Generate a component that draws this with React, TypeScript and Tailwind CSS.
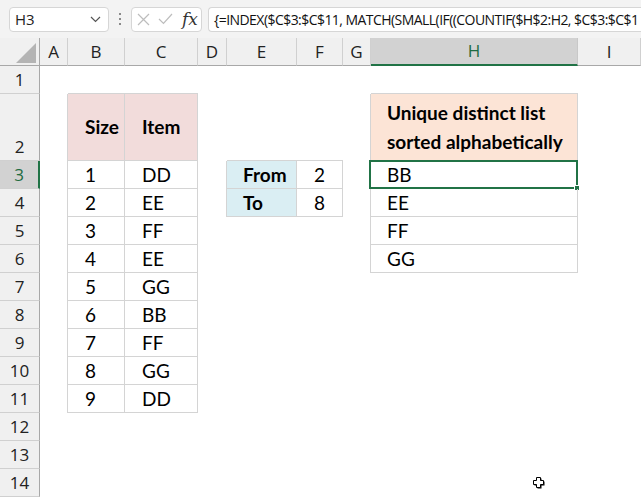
import React from "react";

const COLS: { key: string; w: string }[] = [
  { key: "A", w: "w-[28px]" },
  { key: "B", w: "w-[57px]" },
  { key: "C", w: "w-[73px]" },
  { key: "D", w: "w-[29px]" },
  { key: "E", w: "w-[70px]" },
  { key: "F", w: "w-[46px]" },
  { key: "G", w: "w-[28px]" },
  { key: "H", w: "w-[207px]" },
  { key: "I", w: "flex-1" },
];

const ROWH: Record<number, string> = { 2: "h-[67px]" };

type Cell = { text?: React.ReactNode; bg?: string; bold?: boolean; align?: string; v?: string };

const sizes = [1, 2, 3, 4, 5, 6, 7, 8, 9];
const items = ["DD", "EE", "FF", "EE", "GG", "BB", "FF", "GG", "DD"];
const uniq = ["BB", "EE", "FF", "GG"];

function cellAt(r: number, c: string): Cell | null {
  if ((c === "B" || c === "C") && r >= 2 && r <= 11) {
    if (r === 2)
      return { text: c === "B" ? "Size" : "Item", bg: "bg-[#f2dcdb]", bold: true, align: "pl-[17px]", v: "items-center" };
    return { text: c === "B" ? String(sizes[r - 3]) : items[r - 3], align: "pl-[17px]" };
  }
  if ((c === "E" || c === "F") && (r === 3 || r === 4)) {
    if (c === "E") return { text: r === 3 ? "From" : "To", bg: "bg-[#daeef3]", bold: true, align: "pl-[16px]" };
    return { text: r === 3 ? "2" : "8", align: "justify-center" };
  }
  if (c === "H" && r >= 2 && r <= 6) {
    if (r === 2)
      return {
        text: (
          <span className="leading-[29px]">
            Unique distinct list
            <br />
            sorted alphabetically
          </span>
        ),
        bg: "bg-[#fce4d6]",
        bold: true,
        align: "pl-[16px]",
        v: "items-center",
      };
    return { text: uniq[r - 3], align: "pl-[16px]" };
  }
  return null;
}

function bordered(r: number, ci: number) {
  if (ci < 0 || ci >= COLS.length) return false;
  return cellAt(r, COLS[ci].key) !== null;
}

function Cursor() {
  return (
    <svg className="absolute left-[531px] top-[475px]" width="16" height="16" viewBox="0 0 16 16">
      <path d="M5.5 2.5h4v3h3v4h-3v3h-4v-3h-3v-4h3z" fill="#000" transform="translate(1,1)" />
      <path d="M5.5 2.5h4v3h3v4h-3v3h-4v-3h-3v-4h3z" fill="#fff" stroke="#000" strokeWidth="1" />
    </svg>
  );
}

export default function App() {
  const rows = Array.from({ length: 14 }, (_, i) => i + 1);
  return (
    <div className="relative w-[641px] h-[497px] overflow-hidden bg-white font-['Lato',sans-serif] text-black">
      {/* Formula bar */}
      <div className="h-[38px] bg-[#f3f3f3] flex items-center font-['Open_Sans',sans-serif]">
        <div className="ml-[9px] w-[100px] h-[25px] bg-white border border-[#d6d6d6] rounded-[4px] flex items-center justify-between pl-[5px] pr-[7px]">
          <span className="text-[15px] text-[#222]">H3</span>
          <svg width="11" height="7" viewBox="0 0 11 7">
            <path d="M1 1l4.5 4.5L10 1" fill="none" stroke="#555" strokeWidth="1.2" />
          </svg>
        </div>
        <div className="w-[22px] flex flex-col items-center gap-[3px]">
          <div className="w-[2px] h-[2px] bg-[#8a8a8a]" />
          <div className="w-[2px] h-[2px] bg-[#8a8a8a]" />
          <div className="w-[2px] h-[2px] bg-[#8a8a8a]" />
        </div>
        <div className="w-[71px] h-[25px] bg-white border border-[#d6d6d6] rounded-[4px] flex items-center pl-[5px] gap-[8px]">
          <svg width="13" height="13" viewBox="0 0 13 13">
            <path d="M1 1l11 11M12 1L1 12" stroke="#bdbdbd" strokeWidth="1.2" />
          </svg>
          <svg width="15" height="12" viewBox="0 0 15 12">
            <path d="M1 6l4.5 4.5L14 1" fill="none" stroke="#bdbdbd" strokeWidth="1.2" />
          </svg>
          <span className="font-['DejaVu_Serif',serif] italic text-[17px] text-[#333] leading-none ml-[1px]">fx</span>
        </div>
        <div className="ml-[6px] flex-1 min-w-0 h-[25px] bg-white border border-[#d6d6d6] border-r-0 rounded-l-[4px] flex items-center pl-[5px] overflow-hidden whitespace-nowrap">
          <span className="text-[14px] tracking-[-0.55px] text-[#111]">
            {"{=INDEX($C$3:$C$11, MATCH(SMALL(IF((COUNTIF($H$2:H2, $C$3:$C$1"}
          </span>
        </div>
      </div>

      {/* Column header */}
      <div className="flex h-[28px] bg-[#f0f0f0] font-['Open_Sans',sans-serif] text-[17px] text-[#222]">
        <div className="w-[40px] border-r border-b border-[#a8a8a8] relative">
          <svg className="absolute left-[16px] top-[5px]" width="20" height="20" viewBox="0 0 20 20">
            <path d="M20 0L20 20L0 20Z" fill="#b4b4b4" />
          </svg>
        </div>
        {COLS.map((col) =>
          col.key === "H" ? (
            <div
              key={col.key}
              className={`${col.w} shrink-0 flex items-center justify-center bg-[#d2d2d2] text-[#1e6b41] border-r border-[#c8c8c8] border-b-2 border-b-[#217346]`}
            >
              {col.key}
            </div>
          ) : (
            <div
              key={col.key}
              className={`${col.w} ${col.key === "I" ? "" : "shrink-0"} flex items-center justify-center border-r border-b border-r-[#d0d0d0] border-b-[#a8a8a8]`}
            >
              {col.key}
            </div>
          )
        )}
      </div>

      {/* Rows */}
      {rows.map((r) => (
        <div key={r} className={`flex ${ROWH[r] ?? "h-[28px]"}`}>
          <div
            className={`w-[40px] shrink-0 flex items-end justify-center pb-[2px] font-['Open_Sans',sans-serif] text-[17px] leading-[22px] border-b border-b-[#d0d0d0] ${
              r === 3
                ? "bg-[#d2d2d2] text-[#1e6b41] border-r-2 border-r-[#217346]"
                : "bg-[#f0f0f0] text-[#222] border-r border-r-[#a8a8a8]"
            }`}
          >
            {r}
          </div>
          {COLS.map((col, ci) => {
            const cell = cellAt(r, col.key);
            const br = bordered(r, ci) || bordered(r, ci + 1);
            const bb = bordered(r, ci) || bordered(r + 1, ci);
            const sel = r === 3 && col.key === "H";
            return (
              <div
                key={col.key}
                className={`${col.w} ${col.key === "I" ? "" : "shrink-0"} relative flex ${cell?.v ?? "items-end pb-[2px]"} ${
                  cell?.align ?? ""
                } ${cell?.bg ?? ""} ${br ? "border-r border-r-[#d4d4d4]" : ""} ${bb ? "border-b border-b-[#d4d4d4]" : ""} ${
                  cell?.bold ? "font-bold" : ""
                } text-[19px] leading-[22px] whitespace-nowrap`}
              >
                {cell?.text}
                {sel && (
                  <>
                    <div className="absolute -left-[2px] -top-[1px] -right-[1px] -bottom-[1px] border-2 border-[#217346] pointer-events-none" />
                    <div className="absolute -right-[3px] -bottom-[3px] w-[6px] h-[6px] bg-[#217346] border border-white" />
                  </>
                )}
              </div>
            );
          })}
        </div>
      ))}
      <Cursor />
    </div>
  );
}
